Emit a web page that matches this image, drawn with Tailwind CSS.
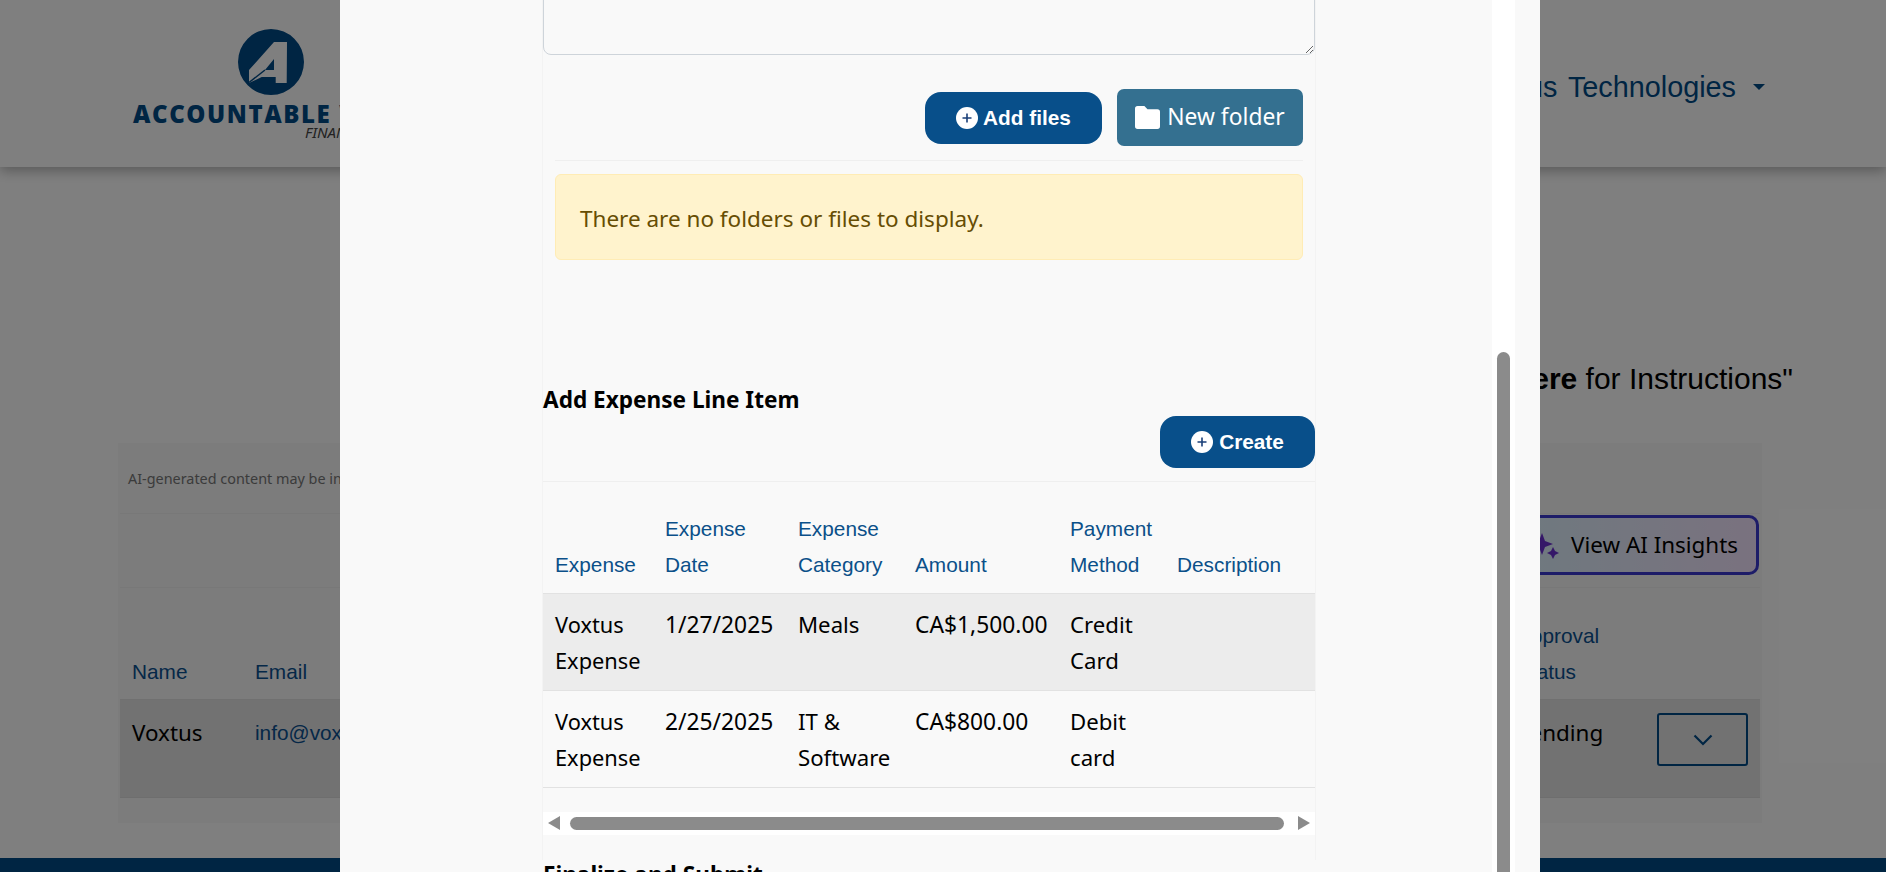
<!DOCTYPE html>
<html lang="en">
<head>
    <meta charset="UTF-8">
    <title>Expense Claim</title>
    <script src="https://cdn.jsdelivr.net/npm/@tailwindcss/browser@4"></script>
</head>
<body class="bg-white overflow-hidden font-['Noto_Sans',sans-serif]">
<div class="relative h-[872px] overflow-hidden">
    <!-- page behind the dialog -->
    <div class="h-full flex flex-col">
        <header class="h-[167px] shrink-0 shadow-[0_4px_12px_rgba(0,0,0,0.3)] flex justify-between">
            <div class="ml-[133px] w-[300px] pt-[29px]">
                <svg class="ml-[105px] block" width="66" height="66" viewBox="0 0 66 66">
                    <path fill="#004a87" fill-rule="evenodd" d="M33 0a33 33 0 1 0 0 66a33 33 0 1 0 0-66ZM36 13H49L48.700 54H37.700V48H23.700L11 54V41ZM36 30L27 41H36Z"/>
                    <path d="M27 41L11 53.500" stroke="#004a87" stroke-width="1.500"/>
                </svg>
                <div class="mt-[8px] h-[22px] leading-[22px] text-[24px] font-extrabold text-[#004a87] font-['Open_Sans',sans-serif] whitespace-nowrap tracking-[1.600px]">ACCOUNTABLE V</div>
                <div class="ml-[172px] -mt-[1px] text-[15px] leading-[16px] italic text-[#444]">FINAN</div>
            </div>
            <div class="mr-[121px] pt-[66px] flex items-start gap-[17px] font-['Liberation_Sans',sans-serif] text-[28.8px] leading-[42px] text-[#004a87]">
                <span class="[word-spacing:3px]">Voxtus Technologies</span>
                <span class="mt-[18px] w-0 h-0 border-x-[6px] border-t-[6px] border-x-transparent border-t-[#004a87]"></span>
            </div>
        </header>
        <main class="flex-1 min-h-0">
            <p class="mt-[191px] pr-[93px] text-right font-['Liberation_Sans',sans-serif] text-[30px] leading-[42px] text-black">"Click <b>Here</b> for Instructions"</p>
            <section class="mt-[43px] ml-[118px] w-[1644px] h-[380px] bg-[#f8f8f8] px-[2px] flex flex-col">
                <div class="h-[71px] border-b border-[#f0f0f0] pt-[26px] px-[8px] text-[14.4px] leading-[20px] text-[#777]">AI-generated content may be in</div>
                <div class="h-[74px] pt-[1px] flex justify-end items-start pr-[1px] border-b border-[#f0f0f0]">
                    <button class="h-[60px] w-[260px] flex items-center justify-end gap-[12px] pr-[18px] rounded-[10px] border-[3px] border-[#3b38d0] bg-linear-to-r from-[#dcf4ff] to-[#f4e4ff] text-[22.4px] text-black">
                        <svg width="28" height="28" viewBox="0 0 28 28"><path fill="#6a2fd0" d="M11 2l3 8 8 3-8 3-3 8-3-8-8-3 8-3ZM22 16l2 4 4 2-4 2-2 4-2-4-4-2 4-2Z"/></svg>
                        <span>View AI Insights</span>
                    </button>
                </div>
                <div class="h-[112px] flex items-end pb-[9px] font-['Liberation_Sans',sans-serif] text-[20.8px] leading-[36px] text-[#0a5090] border-b border-[#e0e0e0]">
                    <span class="w-[135px] pl-[12px]">Name</span>
                    <span class="flex-1">Email</span>
                    <span class="w-[243px]">Approval<br>Status</span>
                </div>
                <div class="h-[98px] flex items-start bg-[#e4e4e4] border-b border-[#dcdcdc] text-[22.4px] leading-[36px]">
                    <span class="w-[135px] pl-[12px] pt-[15px] text-black">Voxtus</span>
                    <span class="flex-1 pt-[15px] font-['Liberation_Sans',sans-serif] text-[20.8px] text-[#0a5090]">info@voxtus.com</span>
                    <span class="w-[141px] pt-[15px] text-black">Pending</span>
                    <button class="mt-[13px] mr-[12px] w-[91px] h-[53px] flex items-center justify-center rounded-[3px] border-2 border-[#004a87]">
                        <svg width="20" height="12" viewBox="0 0 20 12" fill="none" stroke="#004a87" stroke-width="2.200"><path d="M1.500 1.500L10 10L18.500 1.500"/></svg>
                    </button>
                </div>
            </section>
        </main>
        <footer class="h-[14px] shrink-0 bg-[#004a87]"></footer>
    </div>

    <!-- backdrop -->
    <div class="absolute inset-0 bg-black/50"></div>

    <!-- dialog -->
    <div class="absolute top-0 left-[340px] w-[1200px] h-full flex bg-[#f9f9f9] overflow-hidden">
        <div class="flex-1 min-w-0">
            <div class="ml-[202px] w-[774px] h-[900px] border-x border-[#f3f3f3]">
                <textarea class="block w-full h-[95px] -mt-[40px] rounded-lg border border-[#ced4da] bg-[#f9f9f9]"></textarea>

                <div class="mt-[34px] pr-[12px] flex justify-end items-center gap-[15px]">
                    <button class="h-[52px] w-[177px] rounded-[16px] bg-[#084f8a] flex items-center justify-center gap-[5px] text-white font-bold font-['Liberation_Sans',sans-serif] text-[20.8px]">
                        <svg width="22" height="22" viewBox="0 0 22 22"><circle cx="11" cy="11" r="11" fill="#fff"/><path d="M11 6.500v9M6.500 11h9" stroke="#1a3f78" stroke-width="1.600"/></svg>
                        <span>Add files</span>
                    </button>
                    <button class="h-[57px] w-[186px] rounded-[7px] bg-[#347090] flex items-center justify-center gap-[7px] text-white text-[22.8px]">
                        <svg width="25" height="23" viewBox="0 0 24 22"><path fill="#fff" d="M2.500 0H9l3 3h9.500A2.500 2.500 0 0 1 24 5.500v14a2.500 2.500 0 0 1-2.500 2.500h-19A2.500 2.500 0 0 1 0 19.500v-17A2.500 2.500 0 0 1 2.500 0Z"/></svg>
                        <span>New folder</span>
                    </button>
                </div>

                <div class="mt-[14px] mx-[12px] border-t border-[#efefef]"></div>

                <div class="mt-[13px] mx-[12px] h-[86px] px-[24px] pt-[4px] flex items-center rounded-[6px] border border-[#ffecb5] bg-[#fff3cd] text-[#664d03] text-[22.5px]">
                    There are no folders or files to display.
                </div>

                <h2 class="mt-[122px] text-[22.6px] leading-[36px] font-bold text-black">Add Expense Line Item</h2>
                <div class="mt-[-2px] flex justify-end">
                    <button class="h-[52px] w-[155px] rounded-[16px] bg-[#084f8a] flex items-center justify-center gap-[6px] text-white font-bold font-['Liberation_Sans',sans-serif] text-[20.8px]">
                        <svg width="22" height="22" viewBox="0 0 22 22"><circle cx="11" cy="11" r="11" fill="#fff"/><path d="M11 6.500v9M6.500 11h9" stroke="#1a3f78" stroke-width="1.600"/></svg>
                        <span>Create</span>
                    </button>
                </div>
                <div class="mt-[13px] border-t border-[#efefef]"></div>

                <table class="w-full table-fixed border-collapse text-[22.2px] leading-[36px] text-black">
                    <thead>
                        <tr class="border-b border-[#e2e2e2] font-['Liberation_Sans',sans-serif] text-[20.8px] text-[#0b5089]">
                            <th class="w-[110px] h-[111px] pl-[12px] pb-[10px] align-bottom text-left font-normal">Expense</th>
                            <th class="w-[133px] pl-[12px] pb-[10px] align-bottom text-left font-normal">Expense<br>Date</th>
                            <th class="w-[117px] pl-[12px] pb-[10px] align-bottom text-left font-normal">Expense<br>Category</th>
                            <th class="w-[155px] pl-[12px] pb-[10px] align-bottom text-left font-normal">Amount</th>
                            <th class="w-[107px] pl-[12px] pb-[10px] align-bottom text-left font-normal">Payment<br>Method</th>
                            <th class="pl-[12px] pb-[10px] align-bottom text-left font-normal">Description</th>
                        </tr>
                    </thead>
                    <tbody>
                        <tr class="bg-[#ececec] border-b border-[#e2e2e2]">
                            <td class="pl-[12px] pt-[13px] pb-[11px] align-top text-[21.8px]">Voxtus Expense</td>
                            <td class="pl-[12px] pt-[13px] pb-[11px] align-top text-[22.8px]">1/27/2025</td>
                            <td class="pl-[12px] pt-[13px] pb-[11px] align-top">Meals</td>
                            <td class="pl-[12px] pt-[13px] pb-[11px] align-top text-[22.8px]">CA$1,500.00</td>
                            <td class="pl-[12px] pt-[13px] pb-[11px] align-top">Credit Card</td>
                            <td></td>
                        </tr>
                        <tr class="border-b border-[#e2e2e2]">
                            <td class="pl-[12px] pt-[13px] pb-[11px] align-top text-[21.8px]">Voxtus Expense</td>
                            <td class="pl-[12px] pt-[13px] pb-[11px] align-top text-[22.8px]">2/25/2025</td>
                            <td class="pl-[12px] pt-[13px] pb-[11px] align-top">IT &amp; Software</td>
                            <td class="pl-[12px] pt-[13px] pb-[11px] align-top text-[22.8px]">CA$800.00</td>
                            <td class="pl-[12px] pt-[13px] pb-[11px] align-top">Debit card</td>
                            <td></td>
                        </tr>
                    </tbody>
                </table>

                <!-- horizontal scrollbar -->
                <div class="mt-[24px] h-[23px] bg-white flex items-center pl-[5px]">
                    <span class="w-0 h-0 border-y-[7px] border-r-[12px] border-y-transparent border-r-[#8b8b8b]"></span>
                    <span class="ml-[10px] w-[714px] h-[13px] rounded-full bg-[#8b8b8b]"></span>
                    <span class="ml-[14px] w-0 h-0 border-y-[7px] border-l-[12px] border-y-transparent border-l-[#8b8b8b]"></span>
                </div>

                <h2 class="mt-[22px] text-[22.6px] leading-[36px] font-bold text-black">Finalize and Submit</h2>
            </div>
        </div>
        <!-- vertical scrollbar -->
        <div class="w-[23px] shrink-0 bg-white pt-[352px] pl-[5px]">
            <div class="w-[13px] h-[600px] rounded-t-full bg-[#8b8b8b]"></div>
        </div>
        <div class="w-[25px] shrink-0"></div>
    </div>
</div>
</body>
</html>
